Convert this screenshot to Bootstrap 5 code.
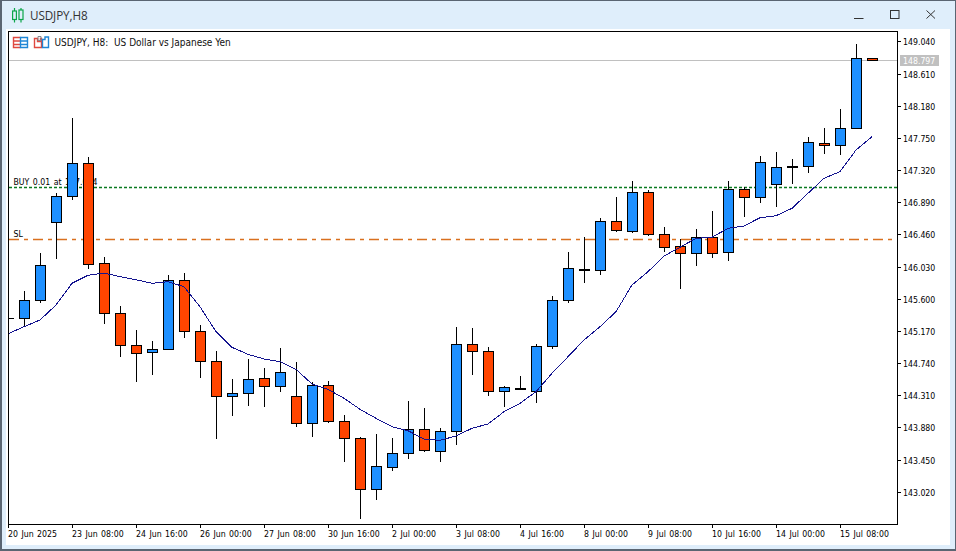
<!DOCTYPE html>
<html lang="en">
<head>
<meta charset="utf-8">
<title>USDJPY,H8</title>
<link href="https://cdn.jsdelivr.net/npm/bootstrap@5.3.0/dist/css/bootstrap.min.css" rel="stylesheet">
<style>
html,body{margin:0;height:100%;background:#dfeefb;overflow:hidden}
.mt-window{width:956px;height:551px;background:#dfeefb;border:solid #5a6572;border-width:1px 1px 2px 2px}
.mt-title{height:28px;padding-left:10px;padding-right:6px;font:12px "Open Sans","Noto Sans",sans-serif;color:#333}
.mt-title-text{margin-left:6px;font-size:11.7px;letter-spacing:-.1px}
.mt-ctl{width:36px;height:28px;border:0;border-radius:0;padding:0;background:transparent}
.mt-panel{margin:0 5px 4px 4px;background:#fff;height:516px;line-height:0}
.mt-svg{display:block}
.tx{font-family:"DejaVu Sans Condensed","DejaVu Sans",sans-serif;font-stretch:condensed;font-size:8.7px;word-spacing:1px;fill:#000}
.tx-head{font-family:"DejaVu Sans Condensed","DejaVu Sans",sans-serif;font-stretch:condensed;font-size:10px;fill:#111}
.tx-bid{fill:#fff}
.frame{fill:none;stroke:#000}
.wick{fill:none;stroke:#000}
.up{fill:#1e90ff;stroke:#000}
.dn{fill:#ff4500;stroke:#000}
.dj{fill:none;stroke:#000;stroke-width:2}
.ma{fill:none;stroke:#14148f;stroke-width:1;shape-rendering:crispEdges}
.crisp{shape-rendering:crispEdges}
.ln-bid{fill:none;stroke:#c0c0c0}
.ln-buy{fill:none;stroke:#0a7a20;stroke-width:1.3;stroke-dasharray:3 2}
.ln-sl{fill:none;stroke:#d9701f;stroke-width:1.3;stroke-dasharray:10 5 4 5}
.ic-r{fill:none;stroke:#e0483f;stroke-width:1.4}
.ic-b{fill:none;stroke:#1f86d6;stroke-width:1.4}
.ic-g{fill:none;stroke:#808890;stroke-width:1}
</style>
</head>
<body>
<div class="mt-window d-flex flex-column">
  <div class="mt-title d-flex align-items-center flex-shrink-0">
    <svg width="12" height="15" viewBox="0 0 12 15" class="flex-shrink-0"><g fill="none" stroke="#0ca64a" stroke-width="1.2"><rect x=".6" y="3" width="3.8" height="8.5"/><path d="M2.5 0v3M2.5 11.5v3"/><rect x="7" y="2" width="4" height="9.5"/><path d="M9 0v2M9 11.5v3"/></g></svg>
    <span class="mt-title-text">USDJPY,H8</span>
    <div class="ms-auto d-flex">
      <button class="btn mt-ctl d-flex align-items-center justify-content-center" type="button" aria-label="Minimize"><svg width="10" height="10" viewBox="0 0 10 10"><path d="M0 8.5h9.5" stroke="#333" fill="none"/></svg></button>
      <button class="btn mt-ctl d-flex align-items-center justify-content-center" type="button" aria-label="Maximize"><svg width="10" height="10" viewBox="0 0 10 10"><rect x=".5" y=".5" width="8.5" height="8" stroke="#333" fill="none"/></svg></button>
      <button class="btn mt-ctl d-flex align-items-center justify-content-center" type="button" aria-label="Close"><svg width="10" height="10" viewBox="0 0 10 10"><path d="M.5 .5l8.5 8M9 .5l-8.5 8" stroke="#333" fill="none"/></svg></button>
    </div>
  </div>
  <div class="mt-panel flex-shrink-0">
    <svg class="mt-svg" width="944" height="516" viewBox="6 29 944 516">
      <path class="ln-bid crisp" d="M9 60.5H897"/>
      <path class="ln-buy" d="M9 187.5H897"/>
      <path class="ln-sl" d="M9 239.5H897"/>
      <text class="tx" x="13.5" y="185">BUY 0.01 at 147.094</text>
      <text class="tx" x="13.5" y="237">SL</text>

      <g class="crisp">
        <path class="wick" d="M9 318.5h5M24.5 291V327M40.5 253V303M56.5 193V259M72.5 118V200M88.5 157V269M104.5 257V324M120.5 306V357M136.5 330V382M152.5 341V375M168.5 275V349M184.5 273V338M200.5 325V378M216.5 351V439M232.5 379V416M248.5 359V406M264.5 368V407M280.5 348V392M296.5 362V427M312.5 382V437M328.5 381V423M344.5 415V462M360.5 437V519M376.5 434V500M392.5 438V471M408.5 401V459M424.5 408V452M440.5 428V462M456.5 327V445M472.5 328V375M488.5 347V396M504.5 386V407M520.5 376V390M536.5 344V403M552.5 296V349M568.5 252V303M584.5 237V283M600.5 218V275M616.5 197V232M632.5 181V233M648.5 190V236M664.5 227V252M680.5 239V289M696.5 229V266M712.5 211V258M728.5 181V261M744.5 187V217M760.5 156V203M776.5 152V207M792.5 159V184M808.5 137V173M824.5 128V154M840.5 109V155M856.5 44V129"/>
        <path class="up" d="M19.5 300.5h10v18h-10zM35.5 265.5h10v35h-10zM51.5 196.5h10v26h-10zM67.5 163.5h10v33h-10zM147.5 349.5h10v3h-10zM163.5 280.5h10v69h-10zM227.5 393.5h10v3h-10zM243.5 379.5h10v14h-10zM275.5 372.5h10v14h-10zM307.5 385.5h10v38h-10zM371.5 466.5h10v23h-10zM387.5 453.5h10v14h-10zM403.5 429.5h10v24h-10zM435.5 431.5h10v20h-10zM451.5 344.5h10v87h-10zM499.5 387.5h10v4h-10zM531.5 346.5h10v45h-10zM547.5 300.5h10v46h-10zM563.5 268.5h10v32h-10zM595.5 221.5h10v49h-10zM627.5 192.5h10v39h-10zM691.5 237.5h10v16h-10zM723.5 189.5h10v63h-10zM755.5 162.5h10v35h-10zM771.5 167.5h10v17h-10zM803.5 142.5h10v24h-10zM835.5 128.5h10v17h-10zM851.5 58.5h10v70h-10z"/>
        <path class="dn" d="M83.5 163.5h10v101h-10zM99.5 263.5h10v50h-10zM115.5 313.5h10v32h-10zM131.5 345.5h10v8h-10zM179.5 280.5h10v51h-10zM195.5 331.5h10v30h-10zM211.5 361.5h10v35h-10zM259.5 378.5h10v8h-10zM291.5 396.5h10v27h-10zM323.5 385.5h10v36h-10zM339.5 421.5h10v17h-10zM355.5 438.5h10v51h-10zM419.5 429.5h10v21h-10zM467.5 344.5h10v7h-10zM483.5 351.5h10v40h-10zM611.5 221.5h10v9h-10zM643.5 192.5h10v42h-10zM659.5 234.5h10v13h-10zM675.5 246.5h10v7h-10zM707.5 237.5h10v16h-10zM739.5 189.5h10v8h-10zM819.5 143.5h10v2h-10zM867.5 58.5h10v2h-10z"/>
        <path class="dj" d="M515 389h11M579 270h11M787 167h11"/>
      </g>
      <polyline class="ma" points="9,333.3 24,326.7 40,320 56,305 72,283.3 88,275.3 104,273 120,276.7 136,279.7 152,283.3 168,281.7 184,286.7 200,306.7 216,331.7 232,347.3 248,354.3 264,359 280,361.7 296,369.3 312,384 328,389.3 344,398.3 360,409.3 376,418.3 392,426.7 408,430.7 424,439 440,440.3 456,436 472,428.3 488,424 504,411.7 520,403.3 536,391.7 552,373.3 568,356.7 584,340 600,326.7 616,311.7 632,285 648,271.7 664,256 680,247.3 696,238.3 712,237.3 728,228.3 744,226 760,217.7 776,215.7 792,208.3 808,193.3 824,178.3 840,171.7 856,150 872,136.7"/>

      <g class="crisp">
        <path class="frame" d="M8.5 524.5V31.5H897.5V524.5Z"/>
        <path class="frame" d="M8.5 525v3M72.5 525v3M136.5 525v3M200.5 525v3M264.5 525v3M328.5 525v3M392.5 525v3M456.5 525v3M520.5 525v3M584.5 525v3M648.5 525v3M712.5 525v3M776.5 525v3M840.5 525v3"/>
        <path class="frame" d="M898 41.5h3M898 74.5h3M898 106.5h3M898 138.5h3M898 170.5h3M898 202.5h3M898 234.5h3M898 267.5h3M898 299.5h3M898 331.5h3M898 363.5h3M898 395.5h3M898 427.5h3M898 460.5h3M898 492.5h3"/>
        <rect x="900" y="55" width="39" height="11" fill="#c0c0c0"/>
      </g>
      <text class="tx" x="903" y="45">149.040</text>
      <text class="tx tx-bid" x="903" y="64">148.797</text>
      <text class="tx" x="903" y="78">148.610</text>
      <text class="tx" x="903" y="110">148.180</text>
      <text class="tx" x="903" y="142">147.750</text>
      <text class="tx" x="903" y="174">147.320</text>
      <text class="tx" x="903" y="206">146.890</text>
      <text class="tx" x="903" y="238">146.460</text>
      <text class="tx" x="903" y="271">146.030</text>
      <text class="tx" x="903" y="303">145.600</text>
      <text class="tx" x="903" y="335">145.170</text>
      <text class="tx" x="903" y="367">144.740</text>
      <text class="tx" x="903" y="399">144.310</text>
      <text class="tx" x="903" y="431">143.880</text>
      <text class="tx" x="903" y="464">143.450</text>
      <text class="tx" x="903" y="496">143.020</text>
      <text class="tx" x="8" y="537">20 Jun 2025</text>
      <text class="tx" x="72" y="537">23 Jun 08:00</text>
      <text class="tx" x="136" y="537">24 Jun 16:00</text>
      <text class="tx" x="200" y="537">26 Jun 00:00</text>
      <text class="tx" x="264" y="537">27 Jun 08:00</text>
      <text class="tx" x="328" y="537">30 Jun 16:00</text>
      <text class="tx" x="392" y="537">2 Jul 00:00</text>
      <text class="tx" x="456" y="537">3 Jul 08:00</text>
      <text class="tx" x="520" y="537">4 Jul 16:00</text>
      <text class="tx" x="584" y="537">8 Jul 00:00</text>
      <text class="tx" x="648" y="537">9 Jul 08:00</text>
      <text class="tx" x="712" y="537">10 Jul 16:00</text>
      <text class="tx" x="776" y="537">14 Jul 00:00</text>
      <text class="tx" x="840" y="537">15 Jul 08:00</text>
      <!-- legend icons -->
      <path class="ic-r" d="M20.500 37.500h-7v10h7M14 41h6.500M14 44.500h6.500"/>
      <path class="ic-b" d="M20.500 37.500h7v10h-7zM21 41h6.500M21 44.500h6.500"/>
      <path class="ic-r" d="M34.500 38.500h3v3h3v-3h1v9h-7z"/>
      <path class="ic-g" d="M38 36.500h3v4h-3z"/>
      <path class="ic-b" d="M42.500 47.500v-8h2.500v-2.500h3.500v10.500z"/>
      <text class="tx-head" x="54.500" y="46">USDJPY, H8:&#160; US Dollar vs Japanese Yen</text>
    </svg>
  </div>
</div>
<script src="https://cdn.jsdelivr.net/npm/bootstrap@5.3.0/dist/js/bootstrap.bundle.min.js"></script>
</body>
</html>
